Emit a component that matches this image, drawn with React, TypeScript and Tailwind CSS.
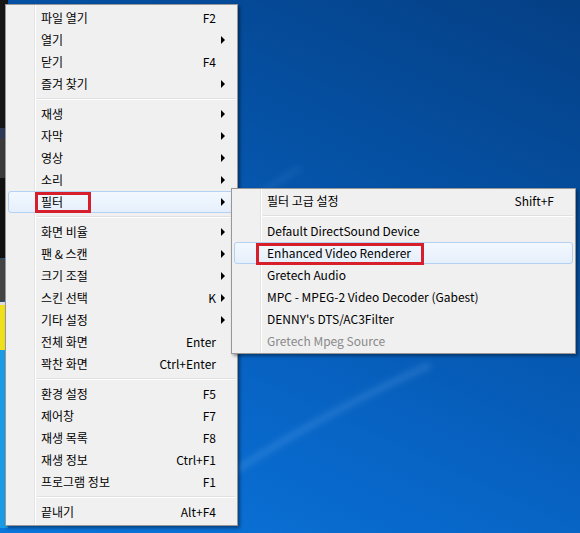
import React from 'react';

type Item =
  | { type: 'sep' }
  | { type?: 'item'; label: string; shortcut?: string; sub?: boolean; active?: boolean; disabled?: boolean };

const mainItems: Item[] = [
  { label: '파일 열기', shortcut: 'F2' },
  { label: '열기', sub: true },
  { label: '닫기', shortcut: 'F4' },
  { label: '즐겨 찾기', sub: true },
  { type: 'sep' },
  { label: '재생', sub: true },
  { label: '자막', sub: true },
  { label: '영상', sub: true },
  { label: '소리', sub: true },
  { label: '필터', sub: true, active: true },
  { type: 'sep' },
  { label: '화면 비율', sub: true },
  { label: '팬 & 스캔', sub: true },
  { label: '크기 조절', sub: true },
  { label: '스킨 선택', shortcut: 'K', sub: true },
  { label: '기타 설정', sub: true },
  { label: '전체 화면', shortcut: 'Enter' },
  { label: '꽉찬 화면', shortcut: 'Ctrl+Enter' },
  { type: 'sep' },
  { label: '환경 설정', shortcut: 'F5' },
  { label: '제어창', shortcut: 'F7' },
  { label: '재생 목록', shortcut: 'F8' },
  { label: '재생 정보', shortcut: 'Ctrl+F1' },
  { label: '프로그램 정보', shortcut: 'F1' },
  { type: 'sep' },
  { label: '끝내기', shortcut: 'Alt+F4' },
];

const filterItems: Item[] = [
  { label: '필터 고급 설정', shortcut: 'Shift+F' },
  { type: 'sep' },
  { label: 'Default DirectSound Device' },
  { label: 'Enhanced Video Renderer', active: true },
  { label: 'Gretech Audio' },
  { label: 'MPC - MPEG-2 Video Decoder (Gabest)' },
  { label: "DENNY's DTS/AC3Filter" },
  { label: 'Gretech Mpeg Source', disabled: true },
];

const font = { fontFamily: '"Noto Sans CJK KR", "Noto Sans", sans-serif' };

const MenuRows: React.FC<{ items: Item[] }> = ({ items }) => (
  <>
    {items.map((item, i) =>
      item.type === 'sep' ? (
        <div key={i} className="h-[8px] flex flex-col justify-center ml-[31px] mr-[2px]">
          <div className="h-px bg-[#e0e0e0]" />
          <div className="h-px bg-white" />
        </div>
      ) : (
        <div
          key={i}
          className={
            'relative h-[22px] mx-[2px] flex items-center pl-[32px] rounded-[3px] border ' +
            (item.active
              ? 'border-[#b3d2f3] bg-[linear-gradient(#f3f8fe,#e5effb)]'
              : 'border-transparent')
          }
        >
          <span className={'flex-1 whitespace-nowrap ' + (item.disabled ? 'text-[#8a8a8a]' : 'text-black')}>
            {item.label}
          </span>
          {item.shortcut && <span className="whitespace-nowrap text-black">{item.shortcut}</span>}
          <span className="w-[18px] h-full flex items-center">
            {item.sub && (
              <span className="ml-[5px] w-0 h-0 border-y-[4px] border-y-transparent border-l-[4px] border-l-black" />
            )}
          </span>
        </div>
      )
    )}
  </>
);

const Gutter: React.FC = () => (
  <div className="absolute left-[28px] top-0 bottom-0 flex">
    <div className="w-px bg-[#e2e3e3]" />
    <div className="w-px bg-white" />
  </div>
);

export default function App() {
  return (
    <div
      className="relative w-[580px] h-[533px] overflow-hidden bg-[linear-gradient(205deg,#053f84_0%,#0552a6_35%,#0866c8_70%,#0b76dc_100%)] text-[12px] leading-none"
      style={font}
    >
      {/* faint wallpaper streak */}
      <svg className="absolute inset-0" width="580" height="533">
        <defs>
          <filter id="b">
            <feGaussianBlur stdDeviation="3" />
          </filter>
        </defs>
        <path d="M 236 470 Q 330 410 430 365" stroke="#9fd0ff" strokeOpacity="0.18" strokeWidth="6" fill="none" filter="url(#b)" />
        <path d="M 250 200 Q 280 180 300 168" stroke="#9fd0ff" strokeOpacity="0.12" strokeWidth="4" fill="none" filter="url(#b)" />
      </svg>

      {/* player window behind the menu */}
      <div className="absolute left-0 top-0 w-[8px] h-[528px] flex flex-col">
        <div className="h-[128px] bg-[#161616]" />
        <div className="h-[10px] bg-[#2c3856]" />
        <div className="h-[40px] bg-[#3a3a3a]" />
        <div className="h-[80px] bg-[#111]" />
        <div className="h-[44px] bg-[#444] rounded-r-full" />
        <div className="h-[3px] bg-[#ddd]" />
        <div className="h-[45px] bg-[#f0e01c]" />
        <div className="flex-1 bg-[#1b9be6]" />
      </div>

      {/* main menu */}
      <div className="absolute left-[5px] top-[4px] w-[233px] border border-[#979797] bg-[#f0f0f0] py-[2px] shadow-[2px_2px_3px_rgba(0,0,0,0.4)]">
        <Gutter />
        <MenuRows items={mainItems} />
        <div className="absolute left-[29px] top-[187px] w-[56px] h-[21px] border-[3px] border-[#d61f2b]" />
      </div>

      {/* filter submenu */}
      <div className="absolute left-[231px] top-[188px] w-[345px] border border-[#979797] bg-[#f0f0f0] py-[1px] shadow-[2px_2px_3px_rgba(0,0,0,0.4)]">
        <Gutter />
        <MenuRows items={filterItems} />
        <div className="absolute left-[24px] top-[54px] w-[168px] h-[22px] border-[3px] border-[#d61f2b]" />
      </div>
    </div>
  );
}
